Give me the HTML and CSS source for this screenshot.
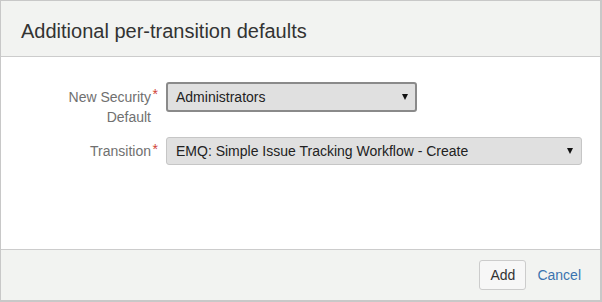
FILE: index.html
```html
<!DOCTYPE html>
<html lang="en">
<head>
    <meta charset="UTF-8">
    <meta name="viewport" content="width=device-width, initial-scale=1.0">
    <title>Additional per-transition defaults</title>
    <link rel="stylesheet" href="styles.css">
</head>
<body>
    <div class="dialog">
        <div class="dialog-header">
            <h2>Additional per-transition defaults</h2>
        </div>
        <div class="dialog-body">
            <div class="field">
                <label class="field-label">New Security Default<span class="req">*</span></label>
                <div class="select select-focus select-short">
                    <span>Administrators</span>
                    <span class="arrow"></span>
                </div>
            </div>
            <div class="field field-second">
                <label class="field-label">Transition<span class="req">*</span></label>
                <div class="select select-long">
                    <span>EMQ: Simple Issue Tracking Workflow - Create</span>
                    <span class="arrow"></span>
                </div>
            </div>
        </div>
        <div class="dialog-footer">
            <button class="btn">Add</button>
            <a href="#" class="cancel">Cancel</a>
        </div>
    </div>
</body>
</html>
```

FILE: styles.css
```css
* {
    box-sizing: border-box;
}
body {
    margin: 0;
    font-family: "Liberation Sans", Arial, sans-serif;
    background: #fff;
}
.dialog {
    width: 602px;
    height: 302px;
    border: 1px solid #c8c8c8;
    border-right-width: 2px;
    border-bottom-width: 2px;
    display: flex;
    flex-direction: column;
}
.dialog-header {
    height: 56px;
    background: #f2f3f1;
    border-bottom: 1px solid #cccccc;
    padding: 18px 20px 0;
}
.dialog-header h2 {
    margin: 0;
    font-size: 20px;
    font-weight: normal;
    line-height: 24px;
    color: #333;
}
.dialog-body {
    flex: 1;
    padding-top: 25px;
}
.field {
    display: flex;
    align-items: flex-start;
}
.field-second {
    margin-top: 10px;
}
.field-label {
    width: 150px;
    text-align: right;
    font-size: 14px;
    line-height: 20px;
    color: #707070;
    padding-left: 60px;
    padding-top: 5px;
    position: relative;
}
.field-second .field-label {
    padding-top: 4px;
}
.req {
    position: absolute;
    right: -7px;
    top: 2px;
    color: #d04437;
    font-size: 14px;
}
.select {
    margin-left: 15px;
    display: flex;
    justify-content: space-between;
    align-items: center;
    background: #e0e0e0;
    border: 1px solid #c6c6c6;
    border-radius: 3px;
    font-size: 14px;
    color: #222;
    padding: 0 8px 0 9px;
}
.select-focus {
    border: 2px solid #8a8a8a;
    padding-left: 8px;
    padding-right: 7px;
}
.select-short {
    width: 251px;
    height: 30px;
}
.select-long {
    width: 416px;
    height: 28px;
}
.arrow {
    width: 0;
    height: 0;
    border-left: 3px solid transparent;
    border-right: 3px solid transparent;
    border-top: 6px solid #111;
}
.dialog-footer {
    height: 51px;
    background: #f2f3f1;
    border-top: 1px solid #cccccc;
    display: flex;
    justify-content: flex-end;
    align-items: flex-start;
    padding: 10px 19px 0 0;
}
.btn {
    height: 30px;
    padding: 0 10px;
    font-family: inherit;
    font-size: 14px;
    color: #333;
    background: #f7f7f7;
    border: 1px solid #cccccc;
    border-radius: 3px;
}
.cancel {
    margin-left: 11px;
    font-size: 14px;
    line-height: 30px;
    color: #3b73af;
    text-decoration: none;
}
```
